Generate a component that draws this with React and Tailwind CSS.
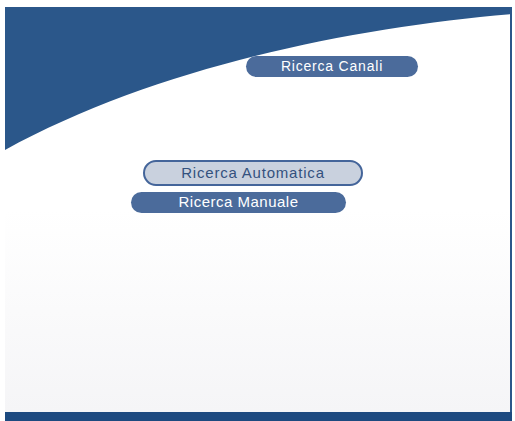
// Schermata "Ricerca Canali" di un menu da decoder
export default function App() {
  const font = { fontFamily: '"Liberation Sans", Arial, sans-serif' };

  return (
    <div className="w-[515px] h-[421px] bg-white pt-[7px] pl-[5px] pr-[3px] flex flex-col" style={font}>
      {/* Pannello principale */}
      <div className="relative flex-1 border-r-2 border-[#2b578a] bg-gradient-to-b from-white via-white to-[#f5f5f7]">
        {/* curva decorativa in alto */}
        <svg className="absolute inset-0" width="507" height="405" viewBox="0 0 507 405">
          <path d="M0,0 H507 V7 C350,20 150,60 0,143 Z" fill="#2b578a" />
        </svg>

        <div className="relative flex flex-col">
          {/* titolo */}
          <div className="mt-[49px] ml-[241px] w-[172px] h-[21px] rounded-full bg-[#4b6b9b] flex items-center justify-center text-white text-[14px] tracking-[0.8px]">
            Ricerca Canali
          </div>

          {/* voci di menu */}
          <div className="mt-[83px] ml-[138px] w-[220px] h-[26px] rounded-full bg-[#c9d1de] border-2 border-[#44659a] flex items-center justify-center text-[#34527f] text-[15px] tracking-[0.8px]">
            Ricerca Automatica
          </div>
          <div className="mt-[6px] ml-[126px] w-[215px] h-[21px] rounded-full bg-[#4b6b9b] flex items-center justify-center text-white text-[15px] tracking-[0.5px]">
            Ricerca Manuale
          </div>
        </div>
      </div>

      {/* barra inferiore */}
      <div className="h-[9px] bg-[#1d4a80]" />
    </div>
  );
}
